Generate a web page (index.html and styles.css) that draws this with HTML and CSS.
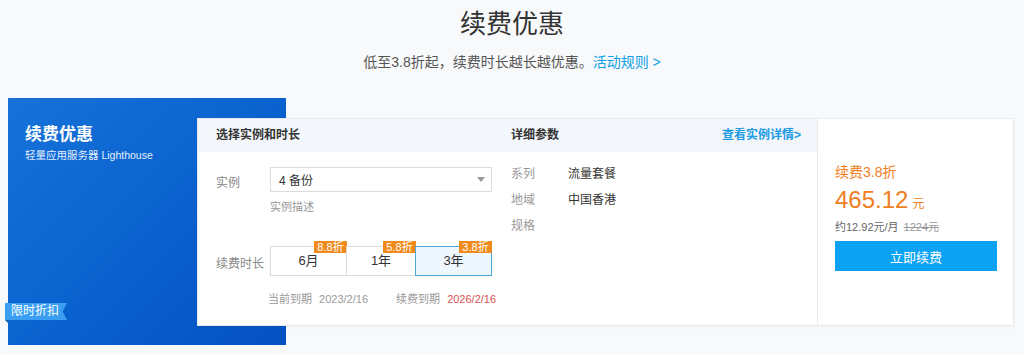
FILE: index.html
```html
<!DOCTYPE html>
<html lang="zh-CN">
<head>
<meta charset="utf-8">
<title>续费优惠</title>
<link rel="stylesheet" href="styles.css">
</head>
<body>
<header class="intro">
  <h1 class="intro-title">续费优惠</h1>
  <p class="intro-sub">低至3.8折起，续费时长越长越优惠。<a class="intro-link" href="#">活动规则 &gt;</a></p>
</header>

<section class="promo">
  <div class="promo-banner">
    <div class="banner-title">续费优惠</div>
    <div class="banner-sub">轻量应用服务器 Lighthouse</div>
    <div class="banner-fold"></div>
    <div class="banner-tag">限时折扣</div>
  </div>

  <div class="card">
    <div class="card-main">
      <div class="card-head head-left">选择实例和时长</div>
      <div class="card-head head-right">
        <span>详细参数</span>
        <a class="detail-link" href="#">查看实例详情&gt;</a>
      </div>

      <div class="pick">
        <div class="form-row">
          <span class="form-label">实例</span>
          <div class="select">
            <span>4 备份</span>
            <i class="select-arrow"></i>
          </div>
        </div>
        <div class="form-desc">实例描述</div>

        <div class="form-row duration-row">
          <span class="form-label">续费时长</span>
          <div class="durations">
            <div class="dur dur-a">6月<span class="dur-badge">8.8折</span></div>
            <div class="dur dur-b">1年<span class="dur-badge">5.8折</span></div>
            <div class="dur dur-c is-active">3年<span class="dur-badge">3.8折</span></div>
          </div>
        </div>

        <div class="expire">
          <span class="expire-label">当前到期</span>
          <span class="expire-date">2023/2/16</span>
          <span class="expire-label expire-gap">续费到期</span>
          <span class="expire-date is-new">2026/2/16</span>
        </div>
      </div>

      <div class="params">
        <div class="param"><span class="param-key">系列</span><span class="param-val">流量套餐</span></div>
        <div class="param"><span class="param-key">地域</span><span class="param-val">中国香港</span></div>
        <div class="param"><span class="param-key">规格</span><span class="param-val"></span></div>
      </div>
    </div>

    <div class="card-price">
      <div class="price-discount">续费3.8折</div>
      <div class="price-main"><span class="price-num">465.12</span><span class="price-unit">元</span></div>
      <div class="price-sub">约12.92元/月<s class="price-old">1224元</s></div>
      <button class="price-btn" type="button">立即续费</button>
    </div>
  </div>
</section>
</body>
</html>
```

FILE: styles.css
```css
* { box-sizing: border-box; }

html, body {
  margin: 0;
  padding: 0;
}

body {
  background: #f8f9fa;
  font-family: "Liberation Sans", "Noto Sans CJK SC", sans-serif;
  color: #333;
  width: 1024px;
  height: 355px;
  overflow: hidden;
}

a { text-decoration: none; }

.intro {
  text-align: center;
  padding-top: 8px;
}

.intro-title {
  margin: 0;
  font-size: 26px;
  line-height: 32px;
  font-weight: normal;
  color: #333;
}

.intro-sub {
  margin: 12px 0 0;
  font-size: 14px;
  line-height: 20px;
  color: #555;
}

.intro-link { color: #0ea0e6; }

.promo {
  display: flex;
  align-items: flex-start;
  padding-left: 8px;
  margin-top: 26px;
}

.promo-banner {
  position: relative;
  flex: 0 0 278px;
  height: 247px;
  background: linear-gradient(135deg, #1672d9 0%, #0b63cf 50%, #0450c2 100%);
  padding: 27px 0 0 17px;
  color: #fff;
}

.banner-title {
  font-size: 17px;
  font-weight: bold;
  line-height: 20px;
}

.banner-sub {
  margin-top: 2px;
  font-size: 10.5px;
  line-height: 16px;
  color: #e6efff;
}

.banner-tag {
  position: absolute;
  left: -3px;
  top: 205px;
  width: 62px;
  height: 17px;
  padding-left: 6px;
  font-size: 12px;
  line-height: 17px;
  color: #fff;
  background: #3a9ff2;
  clip-path: polygon(0 0, 100% 0, 93% 50%, 100% 100%, 0 100%);
}

.banner-fold {
  position: absolute;
  left: -3px;
  top: 222px;
  width: 0;
  height: 0;
  border-top: 3px solid #1d5fa8;
  border-left: 3px solid transparent;
}

.card {
  position: relative;
  z-index: 1;
  flex: 0 0 817px;
  height: 208px;
  margin-left: -89px;
  margin-top: 20px;
  display: flex;
  background: #fff;
  border: 1px solid #e6e9ed;
  box-shadow: 0 1px 3px rgba(0, 0, 0, 0.04);
}

.card-main {
  flex: 0 0 619px;
  display: grid;
  grid-template-columns: 300px 1fr;
  grid-template-rows: 33px 1fr;
}

.card-head {
  background: #f3f7fb;
  font-size: 12px;
  font-weight: bold;
  line-height: 33px;
  color: #333;
}

.head-left { padding-left: 18px; }

.head-right {
  display: flex;
  justify-content: space-between;
  padding: 0 16px 0 13px;
}

.detail-link {
  font-weight: bold;
  color: #1a9ae4;
}

.pick {
  padding: 15px 0 0 18px;
}

.form-row {
  display: flex;
  align-items: center;
}

.form-label {
  flex: 0 0 54px;
  font-size: 12px;
  color: #888;
  padding-top: 3px;
}

.select {
  width: 222px;
  height: 25px;
  border: 1px solid #dcdcdc;
  display: flex;
  align-items: center;
  justify-content: space-between;
  padding: 0 6px 0 8px;
  font-size: 12px;
  color: #333;
}

.select-arrow {
  width: 0;
  height: 0;
  border-left: 4px solid transparent;
  border-right: 4px solid transparent;
  border-top: 5px solid #999;
}

.form-desc {
  margin: 6px 0 0 54px;
  font-size: 11px;
  line-height: 18px;
  color: #999;
}

.duration-row {
  margin-top: 30px;
}

.durations {
  display: flex;
}

.dur {
  position: relative;
  height: 30px;
  border: 1px solid #dcdcdc;
  font-size: 13px;
  line-height: 28px;
  text-align: center;
  color: #333;
  background: #fff;
}

.dur + .dur { margin-left: -1px; }

.dur-a { width: 77px; }
.dur-b { width: 70px; }
.dur-c { width: 77px; }

.dur.is-active {
  border-color: #4fa7d6;
  background: #eef7fd;
  z-index: 1;
}

.dur-badge {
  position: absolute;
  right: -1px;
  top: -6px;
  width: 33px;
  height: 12px;
  background: #f08a1c;
  color: #fff;
  font-size: 11px;
  line-height: 12px;
  text-align: center;
}

.expire {
  margin: 14px 0 0 52px;
  font-size: 11px;
  line-height: 18px;
  color: #999;
  white-space: nowrap;
}

.expire-label { margin-right: 4px; }

.expire-gap { margin-left: 25px; }

.expire-date.is-new { color: #d9534f; }

.params {
  padding: 9px 0 0 13px;
}

.param {
  display: flex;
  font-size: 12px;
  line-height: 26px;
}

.param-key {
  flex: 0 0 57px;
  color: #999;
}

.param-val { color: #333; }

.card-price {
  flex: 1;
  border-left: 1px solid #e8ebef;
  padding: 43px 0 0 17px;
}

.price-discount {
  font-size: 14px;
  line-height: 20px;
  color: #ef7d22;
}

.price-main {
  margin-top: 3px;
  line-height: 30px;
  color: #ef7d22;
}

.price-num {
  font-size: 24px;
}

.price-unit {
  font-size: 12px;
  margin-left: 4px;
}

.price-sub {
  font-size: 11px;
  line-height: 16px;
  color: #666;
}

.price-old {
  margin-left: 5px;
  color: #999;
}

.price-btn {
  display: block;
  margin-top: 6px;
  width: 162px;
  height: 30px;
  border: 0;
  background: #0da3f4;
  color: #fff;
  font-family: inherit;
  font-size: 13px;
  cursor: pointer;
}
```
